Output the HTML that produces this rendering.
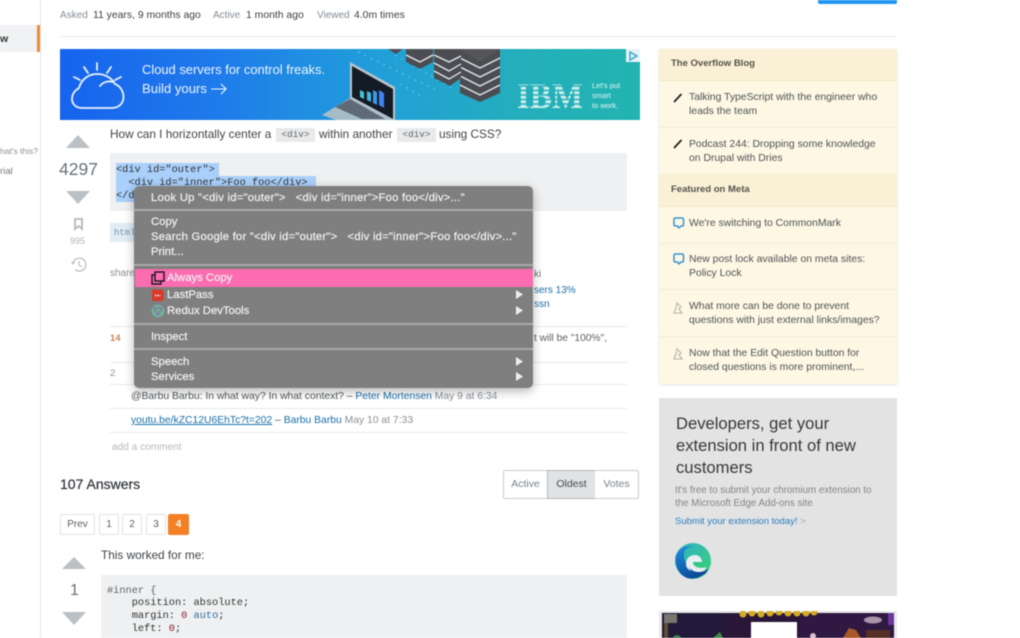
<!DOCTYPE html>
<html lang="en">
<head>
<meta charset="utf-8">
<title>Always Copy</title>
<style>
html,body{margin:0;padding:0;background:#fff}
body{width:1020px;height:638px;overflow:hidden;position:relative;font-family:"Liberation Sans",sans-serif;color:#3b4045}
#w{position:absolute;left:0;top:0;width:1020px;height:638px;overflow:hidden;filter:blur(.45px)}
.a{position:absolute}
.t{position:absolute;white-space:nowrap;line-height:14px;font-size:11px}
.m{font-family:"Liberation Mono",monospace;font-size:10.3px;color:#333}
.l{color:#1a6fa8}
.g{color:#8a8f95}
.ln{position:absolute;height:1px;background:#e8eaec}
.sb{position:absolute;left:659px;width:238px;box-sizing:border-box}
.h{background:#faf0d6;border-bottom:1px solid #f1e6c8}
.i{background:#fdf7e4;border-bottom:1px solid #f4ecd2}
.st{position:absolute;left:689px;font-size:10.4px;line-height:14px;color:#505254;white-space:nowrap}
.sh{position:absolute;left:671px;font-size:9.5px;font-weight:bold;line-height:14px;color:#55534c;white-space:nowrap}
.pg{position:absolute;top:514px;height:21px;box-sizing:border-box;border:1px solid #e0e2e4;border-radius:2px;font-size:10px;line-height:19px;text-align:center;color:#5a5f64;background:#fff}
.tb{position:absolute;top:470px;height:29px;box-sizing:border-box;border:1px solid #c8ccd0;font-size:10.5px;line-height:27px;text-align:center;color:#7a8189;background:#fff}
.mt{position:absolute;font-size:11.3px;line-height:14px;color:#f2f2f2;white-space:nowrap;-webkit-text-stroke:.2px #f2f2f2}
.wd{letter-spacing:.22px}
.sp{position:absolute;left:134px;width:399px;height:2px;background:#a8a8a8}
</style>
</head>
<body>
<div id="w">
<!-- left rail -->
<div class="a" style="left:40px;top:0;width:1px;height:638px;background:#e4e6e8"></div>
<div class="a" style="left:0;top:25px;width:37px;height:27px;background:#f1f2f3"></div>
<div class="a" style="left:37px;top:25px;width:3px;height:27px;background:#ee8a35"></div>
<div class="t" style="left:0;top:32px;font-size:10.5px;font-weight:bold;color:#333">w</div>
<div class="t" style="left:0;top:144px;font-size:8.5px;color:#8a8f95">hat's this?</div>
<div class="t" style="left:0;top:165px;font-size:9.5px;color:#777">rial</div>

<!-- top -->
<div class="a" style="left:818px;top:0;width:79px;height:4px;background:#1f95f0;border-radius:0 0 2px 2px"></div>
<div class="t" style="left:60px;top:9px;font-size:10px;color:#848d95">Asked</div>
<div class="t" style="left:93px;top:9px;font-size:10.4px;color:#3b4045">11 years, 9 months ago</div>
<div class="t" style="left:213px;top:9px;font-size:10px;color:#848d95">Active</div>
<div class="t" style="left:246px;top:9px;font-size:10.4px;color:#3b4045">1 month ago</div>
<div class="t" style="left:317px;top:9px;font-size:10px;color:#848d95">Viewed</div>
<div class="t" style="left:354px;top:9px;font-size:10.4px;color:#3b4045">4.0m times</div>
<div class="ln" style="left:60px;top:36px;width:837px"></div>

<!-- banner -->
<svg class="a" style="left:60px;top:49px" width="580" height="72" viewBox="60 49 580 72">
<defs>
<linearGradient id="bg" x1="0" y1="0" x2="1" y2="0">
<stop offset="0" stop-color="#1763ee"/><stop offset=".28" stop-color="#1f7cea"/><stop offset=".55" stop-color="#219fd9"/><stop offset=".8" stop-color="#24afbb"/><stop offset="1" stop-color="#22b4b0"/>
</linearGradient>
</defs>
<rect x="60" y="49" width="580" height="71" fill="url(#bg)"/>
<!-- cloud -->
<g fill="none" stroke="#e8f2ff" stroke-width="1.800" stroke-linecap="round">
<path d="M82 108H112C119 108 123.500 103 123.500 97C123.500 91 120 86 115 84C112 78 105 74 97 74C88 74 81 80 79 88C74 91 72 95 72 99C72 104 76 108 82 108Z"/>
<path d="M97 63V70M84 67L88 73M111 67L107 73M74 77L80 80M121 77L115 80"/>
<path d="M100 86C103 82 108 80.500 113 82"/>
</g>
<!-- laptop -->
<polygon points="322,115 350,98 394,120 336,120" fill="#a7bcc9"/>
<polygon points="335,107 350,99 385,119 362,119" fill="#5e6a75"/>
<polygon points="350,62 395,87 395,120 392,120 350,98" fill="#b7c4ce"/>
<polygon points="352,66 393,89 393,119 352,97" fill="#151b24"/>
<polygon points="360,90 364,92 364,99 360,97" fill="#42c6d8"/>
<polygon points="367,91 371,93 371,102 367,100" fill="#45b6e3"/>
<polygon points="373,90 377,92 377,105 373,103" fill="#3f96e8"/>
<polygon points="379,90 384,93 384,108 379,105" fill="#3e83f0"/>
<!-- dots -->
<g fill="none" stroke="#6fc6ef" stroke-width="1" stroke-dasharray="2 5">
<path d="M358 52L440 92M395 55L455 90M400 84L425 98"/>
</g>
<!-- server stacks -->
<g>
<polygon points="460,49 500,49 500,93 480,102 460,93" fill="#4b4d52"/>
<g fill="none" stroke="#e6edf0" stroke-width="1.300">
<path d="M460 58L480 68L500 58M460 67L480 77L500 67M460 76L480 86L500 76M460 85L480 95L500 85"/>
</g>
<polygon points="460,49 500,49 480,62" fill="#565659"/>
<polygon points="434,49 461,49 461,78 450,86 434,78" fill="#4b4d52"/>
<g fill="none" stroke="#e6edf0" stroke-width="1.300">
<path d="M434 55L449 62L461 56M434 63L449 71L461 64M434 71L449 79L461 72"/>
</g>
<polygon points="406,49 433,49 433,62 420,69 406,62" fill="#4b4d52"/>
<g fill="none" stroke="#e6edf0" stroke-width="1.300"><path d="M406 55L420 62L433 55"/></g>
<polygon points="388,49 403,49 396,54" fill="#4b4d52"/>
</g>
<!-- IBM text -->
<text x="517" y="108" font-family="Liberation Serif,serif" font-weight="bold" font-size="36" fill="#cdeeea" textLength="66" lengthAdjust="spacingAndGlyphs">IBM</text>
<g stroke="#24aebc" stroke-width="1.500">
<path d="M515 86H585M515 90.500H585M515 95H585M515 99.500H585M515 104H585"/>
</g>
<text x="592" y="88" font-size="7.500" fill="#e6f7f5" font-family="Liberation Sans,sans-serif">Let's put</text>
<text x="592" y="98" font-size="7.500" fill="#e6f7f5" font-family="Liberation Sans,sans-serif">smart</text>
<text x="592" y="108" font-size="7.500" fill="#e6f7f5" font-family="Liberation Sans,sans-serif">to work.</text>
<rect x="626" y="49" width="14" height="13" fill="#e6f2f6"/>
<path d="M630 52V60L637 56Z" fill="none" stroke="#34a6d0" stroke-width="1.400"/>
<text x="142" y="74" font-size="13" fill="#eef5ff" font-family="Liberation Sans,sans-serif" textLength="183" lengthAdjust="spacingAndGlyphs">Cloud servers for control freaks.</text>
<text x="142" y="93" font-size="13" fill="#eef5ff" font-family="Liberation Sans,sans-serif" textLength="65" lengthAdjust="spacingAndGlyphs">Build yours</text>
<path d="M211 89H226M221 84L226 89L221 94" fill="none" stroke="#eef5ff" stroke-width="1.100"/>
</svg>

<!-- question -->
<div class="t" style="left:110px;top:127px;font-size:11.8px;color:#3f4347">How can I horizontally center a</div>
<div class="a m" style="left:276px;top:128px;width:39px;height:14px;line-height:14px;background:#e8e9ea;text-align:center;font-size:9.300px;color:#5e6368">&lt;div&gt;</div>
<div class="t" style="left:319px;top:127px;font-size:11.8px;color:#3f4347">within another</div>
<div class="a m" style="left:397px;top:128px;width:39px;height:14px;line-height:14px;background:#e8e9ea;text-align:center;font-size:9.300px;color:#5e6368">&lt;div&gt;</div>
<div class="t" style="left:439px;top:127px;font-size:11.8px;color:#3f4347">using CSS?</div>

<svg class="a" style="left:60px;top:130px" width="40" height="150" viewBox="60 130 40 150">
<polygon points="66,148 78,135 90,148" fill="#bbc0c4"/>
<polygon points="66,191 90,191 78,204" fill="#bbc0c4"/>
<path d="M75 219H82V229L78.500 226L75 229Z" fill="none" stroke="#b4b9bd" stroke-width="1.800"/>
<g fill="none" stroke="#bcc0c4" stroke-width="1.300"><path d="M73 263A6.500 6.500 0 1 1 75 269.500"/><path d="M79 261V265L82 267"/></g>
<path d="M71 262L75 262L73 265Z" fill="#bcc0c4"/>
</svg>
<div class="t" style="left:59px;top:160px;font-size:17.5px;line-height:18px;color:#6a737c">4297</div>
<div class="t" style="left:70px;top:235px;font-size:9px;line-height:12px;color:#b0b5b9">995</div>

<!-- code -->
<div class="a" style="left:110px;top:153px;width:517px;height:58px;background:#eff0f1"></div>
<div class="a" style="left:116px;top:163px;width:103px;height:13px;background:#a9d0fb"></div>
<div class="a" style="left:116px;top:176px;width:200px;height:13px;background:#a9d0fb"></div>
<div class="a" style="left:116px;top:189px;width:30px;height:13px;background:#a9d0fb"></div>
<div class="t m" style="left:116px;top:164px;line-height:13px">&lt;div id="outer"&gt;</div>
<div class="t m" style="left:116px;top:177px;line-height:13px">&nbsp;&nbsp;&lt;div id="inner"&gt;Foo foo&lt;/div&gt;</div>
<div class="t m" style="left:116px;top:190px;line-height:13px">&lt;/div&gt;</div>

<div class="a" style="left:110px;top:223px;width:30px;height:19px;background:#e1ecf4"></div>
<div class="t m" style="left:114px;top:226px;font-size:9px;color:#6f95b5">html</div>
<div class="t" style="left:110px;top:267px;font-size:10px;color:#8a8f95">share</div>
<div class="t" style="left:534px;top:268px;font-size:10px;color:#6a737c">ki</div>
<div class="t l" style="left:534px;top:284px;font-size:10px">sers 13%</div>
<div class="t l" style="left:534px;top:298px;font-size:10px">ssn</div>

<div class="ln" style="left:110px;top:326px;width:517px"></div>
<div class="ln" style="left:110px;top:362px;width:517px"></div>
<div class="ln" style="left:110px;top:384px;width:517px"></div>
<div class="ln" style="left:110px;top:408px;width:517px"></div>
<div class="ln" style="left:110px;top:432px;width:517px"></div>
<div class="t" style="left:110px;top:332px;font-size:9.5px;font-weight:bold;color:#c9855c">14</div>
<div class="t" style="left:110px;top:367px;font-size:9.5px;color:#8a8f95">2</div>
<div class="t" style="left:534px;top:332px;font-size:10.2px;color:#5c6166">t will be "100%",</div>

<div class="t" style="left:131px;top:390px;font-size:10.35px;color:#50555a">@Barbu Barbu: In what way? In what context? – <span class="l">Peter Mortensen</span> <span class="g">May 9 at 6:34</span></div>
<div class="t" style="left:131px;top:414px;font-size:10.35px;color:#50555a"><span class="l" style="text-decoration:underline">youtu.be/kZC12U6EhTc?t=202</span> – <span class="l">Barbu Barbu</span> <span class="g">May 10 at 7:33</span></div>
<div class="t" style="left:112px;top:441px;font-size:10.1px;color:#b4b8bc">add a comment</div>

<div class="t" style="left:60px;top:476px;font-size:14px;line-height:16px;color:#2f3337;-webkit-text-stroke:.2px #2f3337">107 Answers</div>
<div class="tb" style="left:503px;width:45px;border-radius:2px 0 0 2px">Active</div>
<div class="tb" style="left:547px;width:49px;background:#e0e3e5;color:#45494d;border-color:#b4b9bd">Oldest</div>
<div class="tb" style="left:595px;width:44px;border-left:0;border-radius:0 2px 2px 0">Votes</div>

<div class="pg" style="left:60px;width:35px">Prev</div>
<div class="pg" style="left:99px;width:20px">1</div>
<div class="pg" style="left:122px;width:20px">2</div>
<div class="pg" style="left:146px;width:20px">3</div>
<div class="pg" style="left:168px;width:21px;background:#f48024;border-color:#f48024;color:#fff;font-weight:bold">4</div>

<div class="t" style="left:101px;top:548px;font-size:11.8px;color:#3f4347">This worked for me:</div>
<svg class="a" style="left:60px;top:555px" width="30" height="72" viewBox="60 555 30 72">
<polygon points="62,569 74,557 86,569" fill="#bbc0c4"/>
<polygon points="62,612 86,612 74,625" fill="#bbc0c4"/>
</svg>
<div class="t" style="left:70px;top:582px;font-size:16px;line-height:18px;color:#6a737c">1</div>
<div class="a" style="left:101px;top:575px;width:526px;height:63px;background:#eff0f1"></div>
<div class="t m" style="left:107px;top:585px;line-height:13px;color:#5f6468">#inner {</div>
<div class="t m" style="left:107px;top:597px;line-height:13px">&nbsp;&nbsp;&nbsp;&nbsp;position: absolute;</div>
<div class="t m" style="left:107px;top:610px;line-height:13px">&nbsp;&nbsp;&nbsp;&nbsp;margin: <span style="color:#8b1c2b">0</span> <span style="color:#2d6ea8">auto</span>;</div>
<div class="t m" style="left:107px;top:623px;line-height:13px">&nbsp;&nbsp;&nbsp;&nbsp;left: <span style="color:#8b1c2b">0</span>;</div>

<!-- sidebar -->
<div class="sb" style="top:49px;height:335px;background:#fdf7e4;box-shadow:0 1px 3px rgba(0,0,0,.12)"></div>
<div class="sb h" style="top:49px;height:32px"></div>
<div class="sb i" style="top:81px;height:47px"></div>
<div class="sb i" style="top:128px;height:46px;border:0"></div>
<div class="sb h" style="top:174px;height:33px"></div>
<div class="sb i" style="top:207px;height:37px"></div>
<div class="sb i" style="top:244px;height:46px"></div>
<div class="sb i" style="top:290px;height:47px"></div>
<div class="sb i" style="top:337px;height:47px;border:0"></div>
<div class="sh" style="top:57px">The Overflow Blog</div>
<div class="sh" style="top:183px">Featured on Meta</div>
<div class="st" style="top:91px">Talking TypeScript with the engineer who<br>leads the team</div>
<div class="st" style="top:138px">Podcast 244: Dropping some knowledge<br>on Drupal with Dries</div>
<div class="st" style="top:217px">We're switching to CommonMark</div>
<div class="st" style="top:253px">New post lock available on meta sites:<br>Policy Lock</div>
<div class="st" style="top:300px">What more can be done to prevent<br>questions with just external links/images?</div>
<div class="st" style="top:347px">Now that the Edit Question button for<br>closed questions is more prominent,...</div>
<svg class="a" style="left:670px;top:88px" width="16" height="290" viewBox="670 88 16 290">
<g fill="none" stroke="#222" stroke-width="1.800" stroke-linecap="round">
<path d="M674.500 101.500L681 94.500"/><path d="M674.500 147.500L681 140.500"/>
</g>
<g fill="none" stroke="#3b94d0" stroke-width="1.500" stroke-linejoin="round">
<path d="M675.500 218H682C683 218 683.500 218.500 683.500 219.500V224.500C683.500 225.500 683 226 682 226H681L679 228L677.500 226H675.500C674.500 226 674 225.500 674 224.500V219.500C674 218.500 674.500 218 675.500 218Z"/>
<path d="M675.500 254H682C683 254 683.500 254.500 683.500 255.500V260.500C683.500 261.500 683 262 682 262H681L679 264L677.500 262H675.500C674.500 262 674 261.500 674 260.500V255.500C674 254.500 674.500 254 675.500 254Z"/>
</g>
<g fill="none" stroke="#b5b5ad" stroke-width="1.100">
<path d="M677 303L681 307L679 309L682 313H674L676 308Z"/>
<path d="M677 349L681 353L679 355L682 359H674L676 354Z"/>
</g>
</svg>

<!-- edge ad -->
<div class="sb" style="top:398px;height:198px;background:#e3e3e3"></div>
<div class="t" style="left:676px;top:413px;font-size:16.6px;line-height:22px;color:#383838;white-space:normal;width:210px">Developers, get your<br>extension in front of new<br>customers</div>
<div class="t" style="left:675px;top:484px;font-size:9.75px;line-height:13px;color:#858585">It's free to submit your chromium extension to<br>the Microsoft Edge Add-ons site</div>
<div class="t" style="left:675px;top:515px;font-size:9.5px;color:#2a7fc0">Submit your extension today! <span style="color:#9aa">&gt;</span></div>
<svg class="a" style="left:675px;top:543px" width="36" height="36" viewBox="0 0 36 36">
<defs>
<linearGradient id="e1" x1="0" y1="0" x2="1" y2="1"><stop offset="0" stop-color="#2db0c8"/><stop offset="1" stop-color="#3fd27a"/></linearGradient>
<linearGradient id="e2" x1="0" y1="0" x2=".4" y2="1"><stop offset="0" stop-color="#1f8fdc"/><stop offset="1" stop-color="#0d4d9e"/></linearGradient>
</defs>
<circle cx="18" cy="18" r="18" fill="url(#e1)"/>
<path d="M1 12C4 5 12 2 18 4C10 4 8 9 9 14C10 22 18 29 25 29C28 29 31 28 33 27C28 34 18 38 10 34C3 30-1 20 1 12Z" fill="url(#e2)"/>
<path d="M11 21C11 15 15 12 20 12C24 12 27 15 27 19H18C18 24 24 26 31 24C31 28 27 29 24 29C17 29 11 27 11 21Z" fill="#e8eef2"/>
<path d="M18 19H36V20C36 22 34 24 31 24C25 26 18 24 18 19Z" fill="#35c882"/>
<path d="M14 24C18 30 26 31 33 26L30 31C24 33 17 31 14 24Z" fill="#0f4a96"/>
</svg>

<!-- game ad -->
<svg class="a" style="left:659px;top:611px" width="238" height="27" viewBox="659 611 238 27">
<rect x="659" y="611" width="238" height="27" fill="#e8e8e8"/>
<rect x="662" y="613" width="232" height="25" fill="#2a1638"/>
<rect x="662" y="613" width="60" height="25" fill="#221a3a"/>
<rect x="800" y="613" width="94" height="25" fill="#2f1842"/>
<rect x="664" y="614" width="13" height="9" fill="#77776f"/>
<rect x="664" y="623" width="4" height="15" fill="#5d5033"/>
<ellipse cx="677" cy="638" rx="4" ry="3" fill="#3c7a4a"/>
<path d="M713 638L720 632L723 638Z" fill="#3f8a4a"/>
<g fill="#d4ab22">
<circle cx="743" cy="614" r="3.500"/><circle cx="752" cy="613" r="3.500"/><circle cx="761" cy="614" r="3.500"/><circle cx="770" cy="613" r="3.500"/><circle cx="779" cy="612" r="3.500"/><circle cx="788" cy="613" r="3.500"/><circle cx="797" cy="613" r="3.500"/><circle cx="806" cy="613" r="3.500"/><circle cx="814" cy="612" r="3.500"/>
</g>
<rect x="751" y="622" width="46" height="16" fill="#fff"/>
<ellipse cx="873" cy="620" rx="9" ry="3.500" fill="#a894ab"/>
<rect x="888" y="613" width="6" height="12" fill="#6a37a0"/>
<path d="M843 638L849 628L856 630L861 638Z" fill="#a85a26"/>
<rect x="866" y="630" width="24" height="8" fill="#553023"/>
<ellipse cx="813" cy="636" rx="3" ry="3" fill="#d8bfc8"/>
</svg>

<!-- context menu -->
<div class="a" style="left:134px;top:186px;width:399px;height:202px;background:#7f7f7f;border-radius:5px;box-shadow:0 3px 10px rgba(0,0,0,.3)"></div>
<div class="sp" style="top:209px"></div>
<div class="sp" style="top:264px"></div>
<div class="sp" style="top:323px"></div>
<div class="sp" style="top:348px"></div>
<div class="a" style="left:135px;top:269px;width:398px;height:18px;background:#fb6cb0"></div>
<div class="mt wd" style="left:151px;top:191px">Look Up "&lt;div id="outer"&gt; &nbsp; &lt;div id="inner"&gt;Foo foo&lt;/div&gt;..."</div>
<div class="mt" style="left:151px;top:215px">Copy</div>
<div class="mt wd" style="left:151px;top:230px">Search Google for "&lt;div id="outer"&gt; &nbsp; &lt;div id="inner"&gt;Foo foo&lt;/div&gt;..."</div>
<div class="mt" style="left:151px;top:245px">Print...</div>
<div class="mt" style="left:167px;top:271px">Always Copy</div>
<div class="mt" style="left:167px;top:288px">LastPass</div>
<div class="mt" style="left:167px;top:304px">Redux DevTools</div>
<div class="mt" style="left:151px;top:330px">Inspect</div>
<div class="mt" style="left:151px;top:355px">Speech</div>
<div class="mt" style="left:151px;top:370px">Services</div>
<svg class="a" style="left:134px;top:186px" width="399" height="202" viewBox="134 186 399 202">
<g fill="none" stroke="#1e1420" stroke-width="1.400">
<rect x="155" y="272" width="9" height="9" fill="#fb6cb0"/>
<path d="M155 275H152V284H161V281"/>
</g>
<rect x="152" y="289.500" width="11.500" height="11.500" rx="1.500" fill="#d93a2b"/>
<path d="M155 295.500H160.500" stroke="#fff" stroke-width="1.500" stroke-dasharray="1.500 1"/>
<circle cx="158" cy="311" r="6.500" fill="#6fb09a"/>
<path d="M154 308L158 315L162 308Z" fill="none" stroke="#8a6f9f" stroke-width="1.200"/>
<g fill="#eee">
<polygon points="516,290 516,299 523,294.500"/>
<polygon points="516,306 516,315 523,310.500"/>
<polygon points="516,357 516,366 523,361.500"/>
<polygon points="516,372 516,381 523,376.500"/>
</g>
</svg>
</div>
</body>
</html>
